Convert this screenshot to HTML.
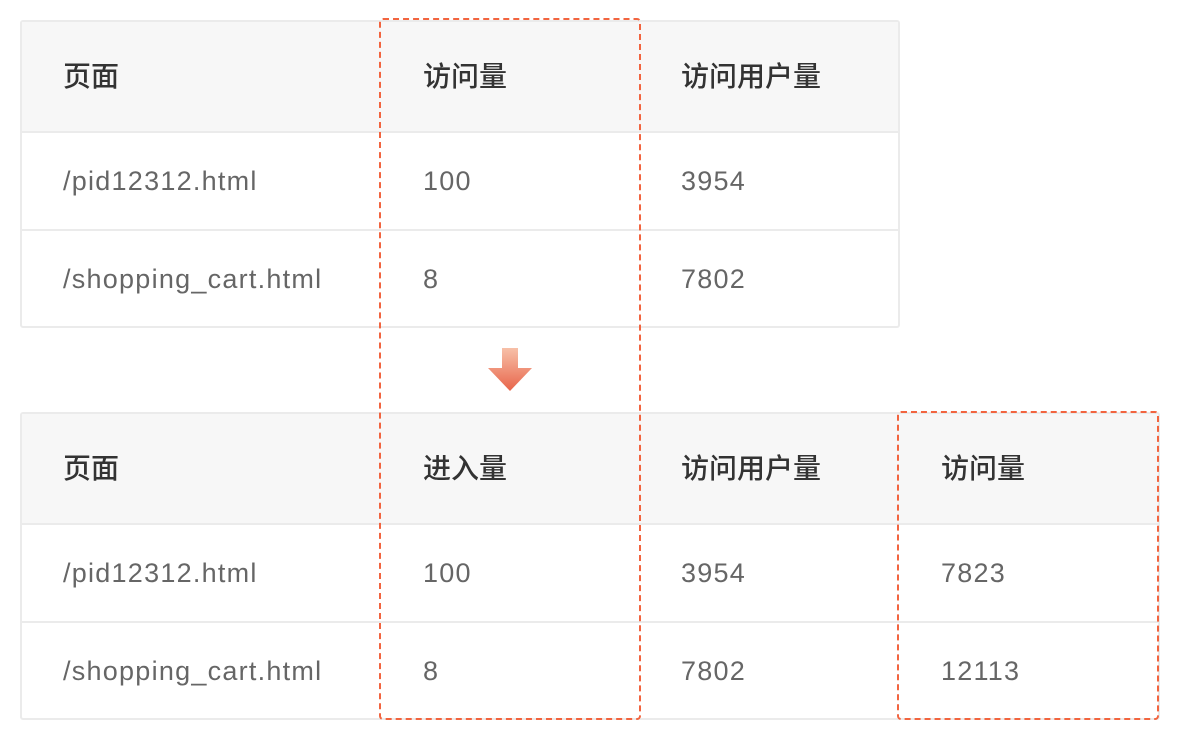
<!DOCTYPE html>
<html><head><meta charset="utf-8"><style>
body{margin:0;width:1180px;height:740px;background:#fff;position:relative;overflow:hidden;font-family:"Liberation Sans","Noto Sans CJK SC",sans-serif}
.t{position:absolute;border:2px solid #ebebeb;border-radius:3px;box-sizing:border-box}
.h{position:absolute;left:0;right:0;top:0;height:109px;background:#f7f7f7;border-bottom:2px solid #ebebeb}
.r{position:absolute;left:0;right:0;height:0;border-top:2px solid #ebebeb}
.c{position:absolute;font-size:27px;line-height:30px;color:#666;letter-spacing:1.25px;white-space:nowrap}
.hd{color:#333;font-weight:500;font-size:28px;letter-spacing:0}
.d{position:absolute;border:2px dashed #f2643f;border-radius:4px;box-sizing:border-box}
</style></head><body>
<div class="t" style="left:20px;top:20px;width:880px;height:308px"><div class="h"></div><div class="r" style="top:207px"></div></div>
<div class="t" style="left:20px;top:412px;width:1140px;height:308px"><div class="h"></div><div class="r" style="top:207px"></div></div>

<div class="c hd" style="left:63px;top:62px">页面</div>
<div class="c hd" style="left:423px;top:62px">访问量</div>
<div class="c hd" style="left:681px;top:62px">访问用户量</div>
<div class="c" style="left:63px;top:166px">/pid12312.html</div>
<div class="c" style="left:423px;top:166px">100</div>
<div class="c" style="left:681px;top:166px">3954</div>
<div class="c" style="left:63px;top:264px">/shopping_cart.html</div>
<div class="c" style="left:423px;top:264px">8</div>
<div class="c" style="left:681px;top:264px">7802</div>

<div class="c hd" style="left:63px;top:454px">页面</div>
<div class="c hd" style="left:423px;top:454px">进入量</div>
<div class="c hd" style="left:681px;top:454px">访问用户量</div>
<div class="c hd" style="left:941px;top:454px">访问量</div>
<div class="c" style="left:63px;top:558px">/pid12312.html</div>
<div class="c" style="left:423px;top:558px">100</div>
<div class="c" style="left:681px;top:558px">3954</div>
<div class="c" style="left:941px;top:558px">7823</div>
<div class="c" style="left:63px;top:656px">/shopping_cart.html</div>
<div class="c" style="left:423px;top:656px">8</div>
<div class="c" style="left:681px;top:656px">7802</div>
<div class="c" style="left:941px;top:656px">12113</div>

<div class="d" style="left:379px;top:18px;width:262px;height:702px"></div>
<div class="d" style="left:897px;top:411px;width:262px;height:309px"></div>

<svg style="position:absolute;left:486px;top:346px" width="48" height="48" viewBox="486 346 48 48">
<defs><linearGradient id="g" x1="0" y1="0" x2="0" y2="1"><stop offset="0" stop-color="#f7c0a8"/><stop offset="1" stop-color="#e8644a"/></linearGradient></defs>
<path d="M502 348H518V368H532L510 391L488 368H502Z" fill="url(#g)"/>
</svg>
</body></html>
